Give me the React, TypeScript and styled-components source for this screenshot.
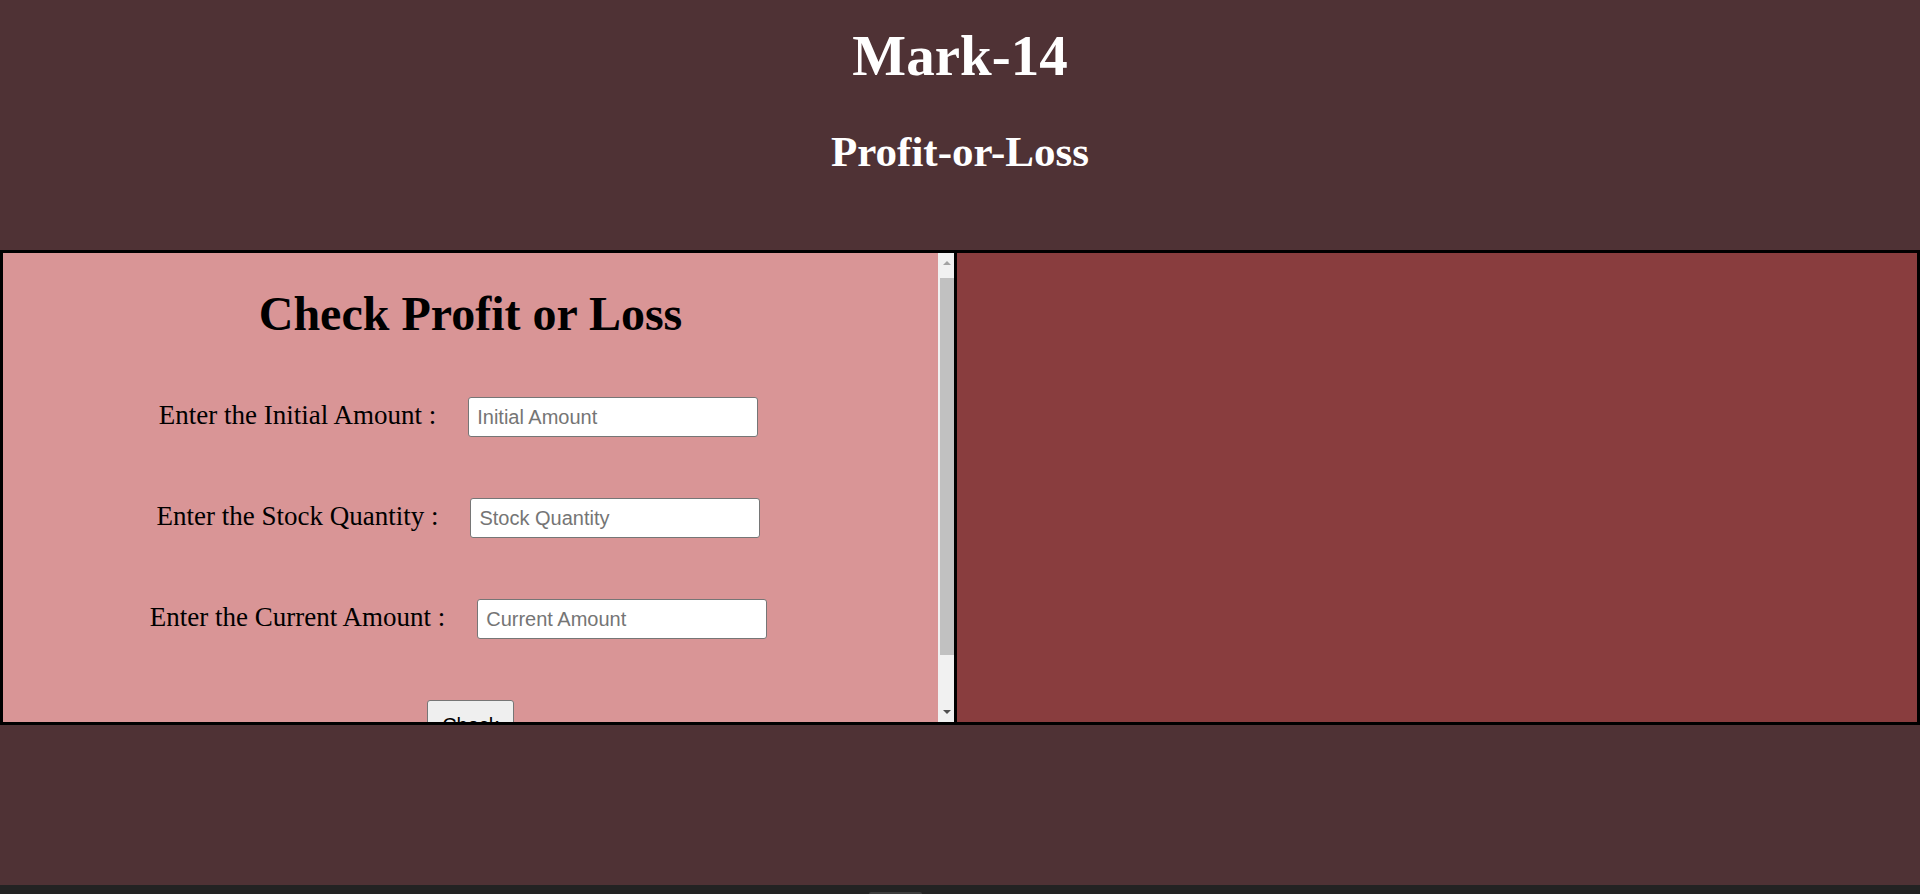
import React from "react";
import styled, { createGlobalStyle } from "styled-components";

const GlobalStyle = createGlobalStyle`
  html, body {
    margin: 0;
    padding: 0;
    background: #4f3235;
    overflow: hidden;
  }
  * { box-sizing: border-box; }
`;

const Page = styled.div`
  display: flex;
  flex-direction: column;
  height: 894px;
  background: #4f3235;
`;

const Main = styled.main`
  flex: 1;
  display: flex;
  flex-direction: column;
`;

const Header = styled.header`
  display: flex;
  flex-direction: column;
  align-items: center;
  padding-top: 23px;
  color: #ffffff;
  font-family: "Liberation Serif", "Times New Roman", serif;
`;

const SiteTitle = styled.h1`
  margin: 0;
  font-size: 57px;
  line-height: 66px;
  font-weight: 700;
`;

const SiteSubtitle = styled.h2`
  margin: 38px 0 0;
  font-size: 43px;
  line-height: 50px;
  font-weight: 700;
`;

const Panels = styled.section`
  margin-top: 73px;
  display: flex;
  height: 475px;
  border: 3px solid #000;
`;

const LeftPane = styled.div`
  flex: 0 0 954px;
  display: flex;
  border-right: 3px solid #000;
  background: #d99596;
  overflow: hidden;
`;

const ScrollArea = styled.div`
  flex: 1;
  overflow: hidden;
`;

const ScrollBar = styled.div`
  flex: 0 0 16px;
  display: flex;
  flex-direction: column;
  background: #f1f1f1;
`;

const ScrollArrow = styled.div<{ $dir: "up" | "down" }>`
  height: 17px;
  display: flex;
  justify-content: center;
  align-items: ${(p) => (p.$dir === "up" ? "flex-end" : "flex-start")};
  padding: ${(p) => (p.$dir === "up" ? "0 0 5px 1px" : "5px 0 0 1px")};

  &::before {
    content: "";
    width: 0;
    height: 0;
    border-left: 4px solid transparent;
    border-right: 4px solid transparent;
    ${(p) =>
      p.$dir === "up"
        ? "border-bottom: 4px solid #a3a3a3;"
        : "border-top: 4px solid #505050;"}
  }
`;

const ScrollTrack = styled.div`
  flex: 1;
  padding: 8px 0 0 2px;
`;

const ScrollThumb = styled.div`
  height: 377px;
  background: #c1c1c1;
`;

const RightPane = styled.div`
  flex: 1;
  background: #893d3e;
`;

const PaneContent = styled.div`
  display: flex;
  flex-direction: column;
  align-items: center;
  padding: 33px 0 33px;
  font-family: "Liberation Serif", "Times New Roman", serif;
  color: #000;
`;

const PaneTitle = styled.h1`
  margin: 0;
  font-size: 48px;
  line-height: 55px;
  font-weight: 700;
`;

const Form = styled.div`
  margin-top: 56px;
  display: flex;
  flex-direction: column;
  align-items: center;
  gap: 61px;
`;

const Row = styled.div`
  display: flex;
  align-items: baseline;
  gap: 32px;
  padding-right: 24px;
`;

const Label = styled.label`
  font-size: 27px;
  line-height: 31px;
  white-space: nowrap;
`;

const Input = styled.input`
  width: 290px;
  height: 40px;
  padding: 0 8px;
  border: 1px solid #767676;
  border-radius: 3px;
  background: #fff;
  font-family: "Liberation Sans", Arial, sans-serif;
  font-size: 20px;
  color: #000;
  outline: none;

  &::placeholder {
    color: #757575;
  }
`;

const CheckButton = styled.button`
  padding: 13px 14px;
  border: 1px solid #767676;
  border-radius: 3px;
  background: #efefef;
  font-family: "Liberation Sans", Arial, sans-serif;
  font-size: 20px;
  line-height: 23px;
  color: #000;
`;

const Footer = styled.footer`
  height: 9px;
  background: #232323;
  display: flex;
  align-items: flex-end;
  padding-left: 869px;
`;

const FooterHandle = styled.div`
  width: 53px;
  height: 2px;
  background: #3d3d3d;
  border-radius: 2px 2px 0 0;
`;

const fields = [
  { id: "initial", label: "Enter the Initial Amount :", placeholder: "Initial Amount" },
  { id: "quantity", label: "Enter the Stock Quantity :", placeholder: "Stock Quantity" },
  { id: "current", label: "Enter the Current Amount :", placeholder: "Current Amount" },
];

export default function App() {
  return (
    <>
      <GlobalStyle />
      <Page>
        <Main>
          <Header>
            <SiteTitle>Mark-14</SiteTitle>
            <SiteSubtitle>Profit-or-Loss</SiteSubtitle>
          </Header>
          <Panels>
            <LeftPane>
              <ScrollArea>
                <PaneContent>
                  <PaneTitle>Check Profit or Loss</PaneTitle>
                  <Form>
                    {fields.map((f) => (
                      <Row key={f.id}>
                        <Label htmlFor={f.id}>{f.label}</Label>
                        <Input id={f.id} type="number" placeholder={f.placeholder} />
                      </Row>
                    ))}
                    <CheckButton type="button">Check</CheckButton>
                  </Form>
                </PaneContent>
              </ScrollArea>
              <ScrollBar>
                <ScrollArrow $dir="up" />
                <ScrollTrack>
                  <ScrollThumb />
                </ScrollTrack>
                <ScrollArrow $dir="down" />
              </ScrollBar>
            </LeftPane>
            <RightPane />
          </Panels>
        </Main>
        <Footer>
          <FooterHandle />
        </Footer>
      </Page>
    </>
  );
}
